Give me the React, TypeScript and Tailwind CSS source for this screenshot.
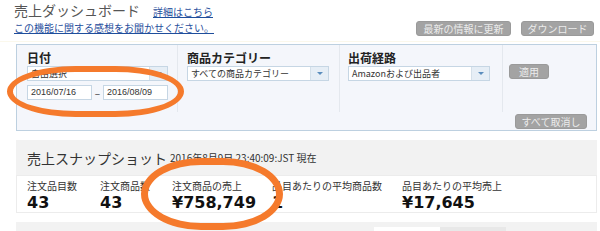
import React from "react";

const jp = "font-['Meiryo','Noto_Sans_CJK_JP',sans-serif]";

function Select({ text, w }: { text: string; w: string }) {
  return (
    <div className={`flex h-[15px] ${w} border border-[#c6d6e4] bg-white`}>
      <div className="flex-1 flex items-center pl-[3px] text-[9px] text-[#333] leading-none whitespace-nowrap overflow-hidden">{text}</div>
      <div className="w-[18px] bg-[#e6eef6] border-l border-[#d4e0ea] flex items-center justify-center">
        <div className="w-0 h-0 border-l-[3px] border-r-[3px] border-t-[3px] border-l-transparent border-r-transparent border-t-[#5b8dbd]" />
      </div>
    </div>
  );
}

function Btn({ children, cls = "" }: { children: React.ReactNode; cls?: string }) {
  return (
    <div className={`h-[15px] px-[8px] rounded-[3px] bg-[#a3a3a3] border border-[#9a9a9a] text-[#ececec] text-[10px] leading-none flex items-center justify-center whitespace-nowrap ${cls}`}>
      {children}
    </div>
  );
}

function Stat({ label, value, w }: { label: string; value: string; w: string }) {
  return (
    <div className={`${w} flex flex-col`}>
      <div className="text-[10px] leading-[12px] text-[#333] whitespace-nowrap">{label}</div>
      <div className="mt-[3px] text-[16px] leading-[16px] font-bold text-[#111] font-['DejaVu_Sans',sans-serif]">{value}</div>
    </div>
  );
}

export default function App() {
  return (
    <div className={`relative w-[600px] h-[231px] overflow-hidden bg-white ${jp}`}>
      {/* header */}
      <div className="flex justify-between items-end pl-[14px] pr-[6px] pt-[1px]">
        <div className="flex flex-col">
          <div className="flex items-end h-[18px]">
            <span className="text-[14px] leading-[18px] text-[#555]">売上ダッシュボード</span>
            <span className="ml-[13px] text-[10px] leading-[14px] text-[#1f4e9c] underline">詳細はこちら</span>
          </div>
          <span className="mt-[2px] text-[10px] leading-[13px] text-[#1f4e9c] underline">この機能に関する感想をお聞かせください。</span>
        </div>
        <div className="flex gap-[10px] mb-[-2px]">
          <Btn cls="w-[95px]">最新の情報に更新</Btn>
          <Btn cls="w-[73px]">ダウンロード</Btn>
        </div>
      </div>
      <div className="h-[1px] mt-[7px] bg-[#fbf8ec]" />

      {/* filter box */}
      <div className="ml-[16px] mt-[2px] w-[581px] h-[87px] border border-[#bdd0e0] bg-[#f4f6fb] flex items-start">
        <div className="w-[161px] h-[67px] border-r border-[#e4e8ee] pl-[10px] pt-[5px]">
          <div className="text-[12px] leading-[16px] font-bold text-[#222]">日付</div>
          <Select text="自由選択" w="w-[141px]" />
          <div className="flex items-center mt-[4px]">
            <div className="w-[65px] h-[15px] border border-[#c6d6e4] bg-white text-[9px] leading-none text-[#333] pl-[3px] flex items-center font-['Liberation_Sans',sans-serif]">2016/07/16</div>
            <div className="w-[11px] text-center text-[10px] leading-none text-[#333]">–</div>
            <div className="w-[65px] h-[15px] border border-[#c6d6e4] bg-white text-[9px] leading-none text-[#333] pl-[3px] flex items-center font-['Liberation_Sans',sans-serif]">2016/08/09</div>
          </div>
        </div>
        <div className="w-[162px] h-[67px] border-r border-[#e4e8ee] pl-[9px] pt-[5px]">
          <div className="text-[12px] leading-[16px] font-bold text-[#222]">商品カテゴリー</div>
          <Select text="すべての商品カテゴリー" w="w-[142px]" />
        </div>
        <div className="w-[163px] h-[67px] border-r border-[#e4e8ee] pl-[8px] pt-[5px]">
          <div className="text-[12px] leading-[16px] font-bold text-[#222]">出荷経路</div>
          <Select text="Amazonおよび出品者" w="w-[142px]" />
        </div>
        <div className="flex-1 h-[85px] flex flex-col pl-[6px] pt-[19px] pr-[9px]">
          <Btn cls="w-[40px] self-start">適用</Btn>
          <div className="flex-1" />
          <Btn cls="w-[72px] self-end mb-[1px]">すべて取消し</Btn>
        </div>
      </div>

      {/* snapshot */}
      <div className="ml-[16px] mt-[9px] w-[581px]">
        <div className="h-[35px] bg-[#f2f2f2] flex items-center pl-[11px]">
          <span className="text-[14px] leading-none text-[#333]">売上スナップショット</span>
          <span className="ml-[3px] text-[10px] leading-none text-[#333]">2016年8月9日 23:40:09:JST 現在</span>
        </div>
        <div className="h-[38px] bg-white border border-[#ececec] flex pl-[10px] pt-[4px]">
          <Stat label="注文品目数" value="43" w="w-[73px]" />
          <Stat label="注文商品数" value="43" w="w-[72px]" />
          <Stat label="注文商品の売上" value="¥758,749" w="w-[100px]" />
          <Stat label="品目あたりの平均商品数" value="1" w="w-[130px]" />
          <Stat label="品目あたりの平均売上" value="¥17,645" w="w-[150px]" />
        </div>
        <div className="mt-[9px] h-[20px] bg-[#f2f2f2] flex justify-end pr-[91px] pt-[5px]">
          <div className="w-[66px] h-[15px] bg-white" />
          <div className="w-[66px] h-[15px] bg-[#e8e8e8]" />
        </div>
      </div>

      {/* orange highlight rings */}
      <div className="absolute left-[7px] top-[66px] w-[177px] h-[51px] border-[6px] border-[#f57a2c] rounded-[70px/26px]" />
      <div className="absolute left-[141px] top-[158px] w-[142px] h-[72px] border-[7px] border-[#f57a2c] rounded-[60px/36px]" />
    </div>
  );
}
